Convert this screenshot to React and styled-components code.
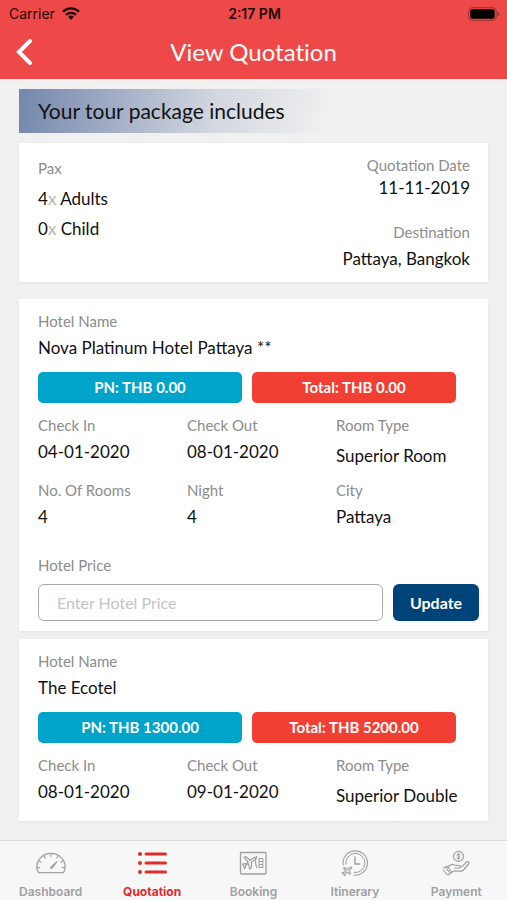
import { useState } from "react";
import styled, { createGlobalStyle } from "styled-components";

const GlobalStyle = createGlobalStyle`
  * {
    box-sizing: border-box;
  }

  body {
    margin: 0;
    background: #f0f0f0;
    color: #111;
    font-family: Lato, "Liberation Sans", sans-serif;
  }
`;

const Screen = styled.div`
  min-height: 100vh;
  display: flex;
  flex-direction: column;
`;

const Header = styled.header`
  background: #ef4848;
`;

const StatusBar = styled.div`
  display: grid;
  grid-template-columns: 1fr auto 1fr;
  align-items: center;
  height: 27px;
  padding: 0 7px 0 9px;
  color: #1c0808;
  font-family: Inter, sans-serif;
  font-size: 14px;
`;

const Carrier = styled.span`
  display: flex;
  align-items: center;
  gap: 7px;
`;

const Clock = styled.span`
  font-weight: 600;
`;

const NavBar = styled.div`
  display: grid;
  grid-template-columns: 48px 1fr 48px;
  align-items: center;
  height: 52px;
  padding-bottom: 3px;
`;

const BackButton = styled.button`
  display: flex;
  align-items: center;
  height: 48px;
  padding: 0 0 0 15px;
  border: 0;
  background: none;
  cursor: pointer;
`;

const Title = styled.h1`
  margin: 0;
  color: #fff;
  font-size: 24px;
  font-weight: 400;
  font-variant-ligatures: none;
  line-height: 48px;
  text-align: center;
`;

const Content = styled.main`
  flex: 1;
  padding: 10px 19px 19px;
`;

const Banner = styled.h2`
  margin: 0 0 10px;
  padding: 0 19px;
  background: linear-gradient(100deg, #7386ac 0%, #d3d7e0 42%, #f0f0f0 66%);
  font-size: 21px;
  font-weight: 400;
  line-height: 44px;
`;

const Card = styled.section`
  background: #fff;
  box-shadow: 0 1px 2px rgba(0, 0, 0, 0.06);
`;

const SummaryCard = styled(Card)`
  display: flex;
  justify-content: space-between;
  margin-bottom: 17px;
  padding: 12px 18px 11px 19px;
`;

const PaxColumn = styled.div`
  padding-top: 3px;
`;

const PaxLine = styled.p`
  margin: 0;
  font-size: 17px;
  line-height: 30px;

  &:first-of-type {
    margin-top: 6px;
  }

  span {
    color: #b5b5b5;
  }
`;

const TripColumn = styled.div`
  display: flex;
  flex-direction: column;
  gap: 22px;
  text-align: right;
`;

const HotelCard = styled(Card)`
  padding: 12px 9px ${(props) => (props.$editable ? "10px" : "9px")} 19px;

  & + & {
    margin-top: 8px;
  }
`;

const Label = styled.div`
  color: #8c8c8c;
  font-size: 15px;
  line-height: 20px;
`;

const Value = styled.div`
  margin-top: ${(props) => (props.$tight ? "1px" : "5px")};
  font-size: 17px;
  line-height: ${(props) => (props.$tall ? "32px" : "24px")};
`;

const Pills = styled.div`
  display: grid;
  grid-template-columns: 1fr 1fr;
  gap: 10px;
  margin: 12px 23px 12px 0;
`;

const Pill = styled.div`
  border-radius: 5px;
  background: ${(props) => props.$color};
  color: #fff;
  font-size: 15px;
  font-weight: 700;
  line-height: 31px;
  text-align: center;
`;

const Details = styled.div`
  display: grid;
  grid-template-columns: repeat(3, 1fr);
  gap: 8px 6px;
`;

const PriceForm = styled.form`
  display: grid;
  grid-template-columns: 1fr 86px;
  gap: 9px 10px;
  margin-top: 26px;
`;

const PriceLabel = styled.label`
  grid-column: 1 / -1;
  color: #8c8c8c;
  font-size: 15px;
  line-height: 20px;
`;

const PriceInput = styled.input`
  width: 100%;
  height: 37px;
  padding: 0 18px;
  border: 1px solid #a9a9a9;
  border-radius: 6px;
  background: #fff;
  font: 16px Lato, sans-serif;

  &::placeholder {
    color: #c4c4c4;
  }
`;

const UpdateButton = styled.button`
  height: 37px;
  padding: 0;
  border: 0;
  border-radius: 6px;
  background: #004378;
  color: #fff;
  font: 700 16px Lato, sans-serif;
  cursor: pointer;
`;

const TabBar = styled.nav`
  position: sticky;
  bottom: 0;
  display: grid;
  grid-template-columns: repeat(5, 1fr);
  height: 60px;
  border-top: 1px solid #dcdcdc;
  background: #f7f7f7;
`;

const Tab = styled.a`
  display: flex;
  flex-direction: column;
  align-items: center;
  padding-top: 8px;
  color: ${(props) => (props.$active ? "#e02b2b" : "#a0a0a0")};
  font-family: Inter, sans-serif;
  font-size: 12px;
  font-weight: ${(props) => (props.$active ? 700 : 600)};
  line-height: 16px;
  text-decoration: none;

  svg {
    margin-bottom: 7px;
  }
`;

const TabSvg = ({ children }) => (
  <svg
    width='32'
    height='28'
    viewBox='0 0 32 28'
    fill='none'
    stroke='currentColor'
    strokeLinecap='round'
    strokeLinejoin='round'
    aria-hidden='true'
  >
    {children}
  </svg>
);

const DashboardIcon = () => (
  <TabSvg>
    <path
      d='M3.6 23.6Q1.8 21 1.8 18a14.2 13.6 0 0 1 28.4 0q0 3-1.8 5.6Z'
      strokeWidth='1.3'
    />
    <path
      d='M16 5v2.6M9 7l1.2 2M23 7l-1.2 2M4.2 12l2 1.2M27.8 12l-2 1.2M2.6 18.6h2.2M29.4 18.6h-2.2'
      strokeWidth='1.1'
    />
    <path d='M15.6 18.4 22 12.6l-5.2 6.8a.9.9 0 0 1-1.2-1Z' strokeWidth='1.2' />
  </TabSvg>
);

const QuotationIcon = () => (
  <TabSvg>
    <path d='M10 5h19.5M10 14h19.5M10 23h19.5' strokeWidth='3' />
    <g fill='currentColor' stroke='none'>
      <circle cx='4' cy='5' r='2' />
      <circle cx='4' cy='14' r='2' />
      <circle cx='4' cy='23' r='2' />
    </g>
  </TabSvg>
);

const BookingIcon = () => (
  <TabSvg>
    <rect x='3.5' y='3.5' width='25.5' height='21.5' rx='0.8' strokeWidth='1.3' />
    <path
      d='M7 8.2 9 7.6l4.2 3.6 4-2.6q1.4-.7 1.8.2.3 1-.8 1.7l-3.6 2.4-.3 6-1.7 1-1.2-5.2-2.8 1.8-.2 2.2-1 .7-.8-2.6-1.2-1.6 1-.5 2 .3 2.8-2Z'
      strokeWidth='1.2'
    />
    <path d='M19.8 7.2q-2.6 5 0 11.4M22 9.5h3.8v9H22ZM22 12.5h3.8M22 15.5h3.8' strokeWidth='1.1' />
  </TabSvg>
);

const ItineraryIcon = () => (
  <TabSvg>
    <path d='M4.2 16A12.2 12.2 0 1 1 15 26.2' strokeWidth='1.1' />
    <path d='M6.8 15.2A9.6 9.6 0 1 1 15 23.5' strokeWidth='1' />
    <path d='M16 8v7h4.6' strokeWidth='1.4' />
    <path
      d='M4.4 19.2 6 18.6l2.6 1.6 2.6-2q1-.5 1.4.1.3.7-.4 1.3l-2.2 1.8 1.6 3.2-1.2.6-2.4-2.2-1.8 1.6v1.6l-.9.3-.7-1.6-1.5-.8.5-.8 1.5.1 1.8-1.9Z'
      strokeWidth='1.1'
    />
  </TabSvg>
);

const PaymentIcon = () => (
  <TabSvg>
    <circle cx='18.5' cy='7.4' r='5' strokeWidth='1.2' />
    <path
      d='M20 5.6q-2.8-1.2-3 .3c0 1.6 3.1 1 3 2.8-.2 1.4-2.4 1-3.2.3M18.5 4.3v6.2'
      strokeWidth='1'
    />
    <path
      d='M7.6 18.4q3.6-4.2 6.8-2.4 1 .5 4.8.5 1.5.2 1.4 1.4-.2 1-1.6 1.1h-4.2M20.6 18l2.4-1.3 3.4-3.6q1.3-1 2.2-.1.7.9-.1 2l-5 6q-1.2 1.2-2.6 1.2h-7.4l-2 1.2'
      strokeWidth='1.2'
    />
    <path d='m3.4 19 3.2-1.6q.8-.2 1.2.4l3.6 5q.3.8-.4 1.3l-2.6 1.7M3.4 21l4 5M6 19l4 4.8' strokeWidth='1.1' />
  </TabSvg>
);

const WifiIcon = () => (
  <svg width='18' height='13' viewBox='0 0 18 13' fill='none' stroke='currentColor' aria-hidden='true'>
    <path d='M1 4.6a11.6 11.6 0 0 1 16 0' strokeWidth='2.3' />
    <path d='M4 7.9a7.2 7.2 0 0 1 10 0' strokeWidth='2.2' />
    <path d='m9 12.8-2.8-2.9a4 4 0 0 1 5.6 0Z' fill='currentColor' stroke='none' />
  </svg>
);

const Battery = styled.svg`
  justify-self: end;
`;

const BatteryIcon = () => (
  <Battery width='32' height='14' viewBox='0 0 32 14' aria-hidden='true'>
    <rect x='0.7' y='0.7' width='27.6' height='12.6' rx='3.4' fill='none' stroke='#9c3030' />
    <rect x='2.3' y='2.3' width='24.4' height='9.4' rx='2' fill='#000' />
    <path d='M29.6 4.8q1.8.8 1.8 2.2t-1.8 2.2Z' fill='#8a2a2a' />
  </Battery>
);

const hotels = [
  {
    name: "Nova Platinum Hotel Pattaya **",
    perNight: "0.00",
    total: "0.00",
    checkIn: "04-01-2020",
    checkOut: "08-01-2020",
    roomType: "Superior Room",
    rooms: 4,
    nights: 4,
    city: "Pattaya",
  },
  {
    name: "The Ecotel",
    perNight: "1300.00",
    total: "5200.00",
    checkIn: "08-01-2020",
    checkOut: "09-01-2020",
    roomType: "Superior Double",
  },
];

const tabs = [
  { name: "Dashboard", Icon: DashboardIcon },
  { name: "Quotation", Icon: QuotationIcon },
  { name: "Booking", Icon: BookingIcon },
  { name: "Itinerary", Icon: ItineraryIcon },
  { name: "Payment", Icon: PaymentIcon },
];

const Field = ({ label, tight, tall, children }) => (
  <div>
    <Label>{label}</Label>
    <Value $tight={tight} $tall={tall}>
      {children}
    </Value>
  </div>
);

const Hotel = ({ hotel }) => {
  const [price, setPrice] = useState("");
  const editable = Boolean(hotel.city);

  return (
    <HotelCard $editable={editable}>
      <Field label='Hotel Name'>{hotel.name}</Field>
      <Pills>
        <Pill $color='#00a3c9'>PN: THB {hotel.perNight}</Pill>
        <Pill $color='#f23f33'>Total: THB {hotel.total}</Pill>
      </Pills>
      <Details>
        <Field label='Check In'>{hotel.checkIn}</Field>
        <Field label='Check Out'>{hotel.checkOut}</Field>
        <Field label='Room Type' tall>
          {hotel.roomType}
        </Field>
        {editable && (
          <>
            <Field label='No. Of Rooms'>{hotel.rooms}</Field>
            <Field label='Night'>{hotel.nights}</Field>
            <Field label='City'>{hotel.city}</Field>
          </>
        )}
      </Details>
      {editable && (
        <PriceForm onSubmit={(e) => e.preventDefault()}>
          <PriceLabel htmlFor='hotel-price'>Hotel Price</PriceLabel>
          <PriceInput
            id='hotel-price'
            placeholder='Enter Hotel Price'
            value={price}
            onChange={(e) => setPrice(e.target.value)}
          />
          <UpdateButton type='submit'>Update</UpdateButton>
        </PriceForm>
      )}
    </HotelCard>
  );
};

export default function App() {
  const [active, setActive] = useState("Quotation");

  return (
    <Screen>
      <GlobalStyle />
      <Header>
        <StatusBar>
          <Carrier>
            Carrier <WifiIcon />
          </Carrier>
          <Clock>2:17 PM</Clock>
          <BatteryIcon />
        </StatusBar>
        <NavBar>
          <BackButton type='button' aria-label='Back'>
            <svg width='18' height='28' viewBox='0 0 18 28' fill='none' stroke='#fff'>
              <path d='M15 3 4 14l11 11' strokeWidth='4' strokeLinecap='round' strokeLinejoin='miter' />
            </svg>
          </BackButton>
          <Title>View Quotation</Title>
        </NavBar>
      </Header>
      <Content>
        <Banner>Your tour package includes</Banner>
        <SummaryCard>
          <PaxColumn>
            <Label>Pax</Label>
            <PaxLine>
              4<span>x</span> Adults
            </PaxLine>
            <PaxLine>
              0<span>x</span> Child
            </PaxLine>
          </PaxColumn>
          <TripColumn>
            <Field label='Quotation Date' tight>
              11-11-2019
            </Field>
            <Field label='Destination'>Pattaya, Bangkok</Field>
          </TripColumn>
        </SummaryCard>
        {hotels.map((hotel) => (
          <Hotel key={hotel.name} hotel={hotel} />
        ))}
      </Content>
      <TabBar>
        {tabs.map(({ name, Icon }) => (
          <Tab
            key={name}
            href={`#${name.toLowerCase()}`}
            $active={active === name}
            onClick={() => setActive(name)}
          >
            <Icon />
            {name}
          </Tab>
        ))}
      </TabBar>
    </Screen>
  );
}
